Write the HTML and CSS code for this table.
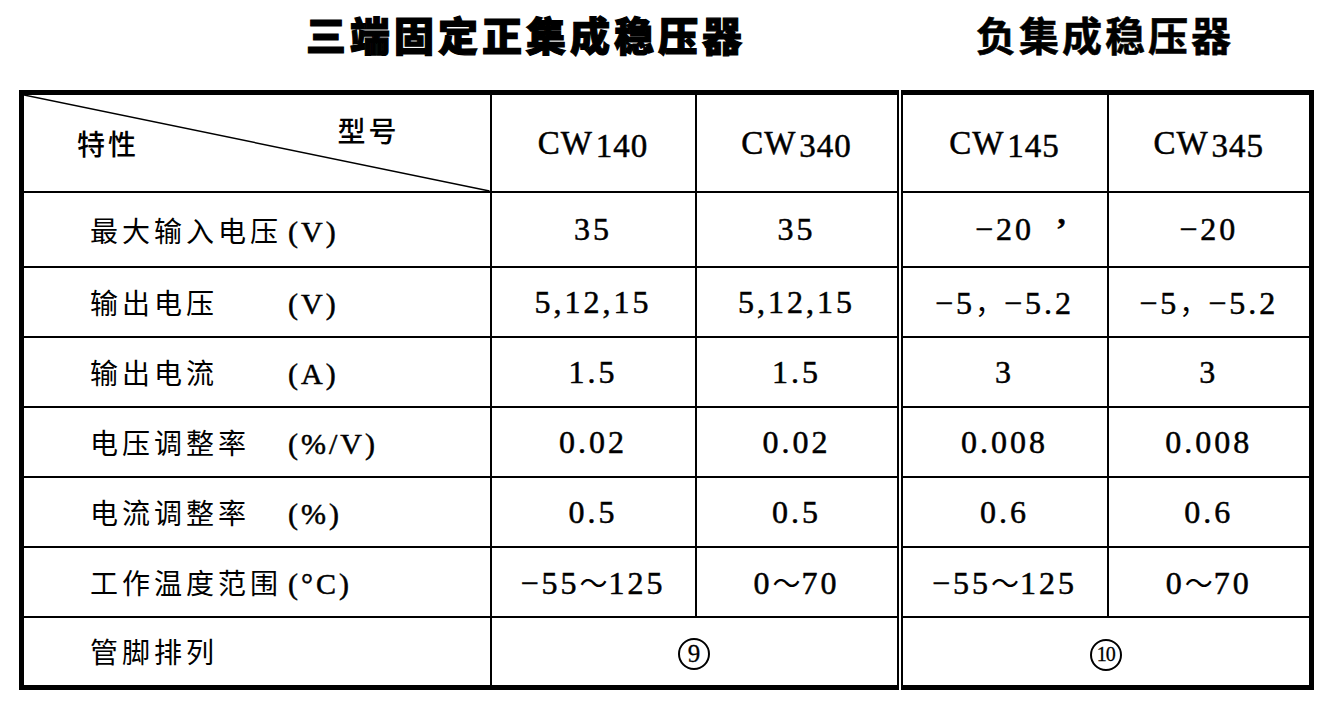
FILE: index.html
```html
<!DOCTYPE html>
<html lang="zh-CN">
<head>
    <meta charset="UTF-8">
    <meta name="viewport" content="width=device-width, initial-scale=1.0">
    <title>三端固定集成稳压器</title>
    <link rel="stylesheet" href="styles.css">
</head>
<body>
    <div class="page">
        <!-- Titles -->
        <div class="titles">
            <h1 class="title title-pos">三端固定正集成稳压器</h1>
            <h1 class="title title-neg">负集成稳压器</h1>
        </div>

        <!-- Spec table -->
        <table class="spec">
            <colgroup>
                <col class="c-label">
                <col class="c-140">
                <col class="c-340">
                <col class="c-145">
                <col class="c-345">
            </colgroup>
            <thead>
                <tr class="head-row">
                    <th class="corner">
                        <div class="corner-box">
                            <svg class="diag" viewBox="0 0 100 100" preserveAspectRatio="none">
                                <line x1="0" y1="0" x2="100" y2="100" vector-effect="non-scaling-stroke"></line>
                            </svg>
                            <span class="corner-row">特性</span>
                            <span class="corner-col">型号</span>
                        </div>
                    </th>
                    <th class="model">CW<span class="model-num">140</span></th>
                    <th class="model">CW<span class="model-num">340</span></th>
                    <th class="model split">CW<span class="model-num">145</span></th>
                    <th class="model">CW<span class="model-num">345</span></th>
                </tr>
            </thead>
            <tbody>
                <tr class="first-row">
                    <td class="label"><span class="name">最大输入电压</span><span class="unit">(V)</span></td>
                    <td class="val">35</td>
                    <td class="val">35</td>
                    <td class="val split">−20<span class="tick">’</span></td>
                    <td class="val">−20</td>
                </tr>
                <tr>
                    <td class="label"><span class="name">输出电压</span><span class="unit">(V)</span></td>
                    <td class="val">5,12,15</td>
                    <td class="val">5,12,15</td>
                    <td class="val split">−5<span class="cjk">，</span>−5.2</td>
                    <td class="val">−5<span class="cjk">，</span>−5.2</td>
                </tr>
                <tr>
                    <td class="label"><span class="name">输出电流</span><span class="unit">(A)</span></td>
                    <td class="val">1.5</td>
                    <td class="val">1.5</td>
                    <td class="val split">3</td>
                    <td class="val">3</td>
                </tr>
                <tr>
                    <td class="label"><span class="name">电压调整率</span><span class="unit">(%/V)</span></td>
                    <td class="val">0.02</td>
                    <td class="val">0.02</td>
                    <td class="val split">0.008</td>
                    <td class="val">0.008</td>
                </tr>
                <tr>
                    <td class="label"><span class="name">电流调整率</span><span class="unit">(%)</span></td>
                    <td class="val">0.5</td>
                    <td class="val">0.5</td>
                    <td class="val split">0.6</td>
                    <td class="val">0.6</td>
                </tr>
                <tr>
                    <td class="label"><span class="name">工作温度范围</span><span class="unit">(°C)</span></td>
                    <td class="val">−55<span class="cjk">～</span>125</td>
                    <td class="val">0<span class="cjk">～</span>70</td>
                    <td class="val split">−55<span class="cjk">～</span>125</td>
                    <td class="val">0<span class="cjk">～</span>70</td>
                </tr>
                <tr>
                    <td class="label"><span class="name">管脚排列</span></td>
                    <td class="val" colspan="2"><span class="circ">9</span></td>
                    <td class="val split" colspan="2"><span class="circ circ-wide">10</span></td>
                </tr>
            </tbody>
        </table>
    </div>
</body>
</html>
```

FILE: styles.css
```css
* {
    margin: 0;
    padding: 0;
    box-sizing: border-box;
}

body {
    background: #fff;
    color: #000;
    font-family: "Noto Sans CJK SC", sans-serif;
}

.page {
    width: 1328px;
    height: 719px;
    overflow: hidden;
}

/* Titles */
.titles {
    display: flex;
    height: 90px;
    padding: 10px 0 0 306px;
}

.title {
    font-size: 40px;
    line-height: 48px;
    font-weight: 900;
    letter-spacing: 4px;
    -webkit-text-stroke: 1.2px #000;
}

.title-neg {
    margin-left: 230px;
    letter-spacing: 3px;
    font-weight: 700;
    -webkit-text-stroke: 0.6px #000;
}

/* Table */
.spec {
    margin-left: 19px;
    width: 1290px;
    table-layout: fixed;
    border-collapse: collapse;
    border: 5px solid #000;
}

.c-label { width: 469px; }
.c-140 { width: 205px; }
.c-340 { width: 204px; }
.c-145 { width: 208px; }
.c-345 { width: 204px; }

.spec th,
.spec td {
    border: 2px solid #000;
    font-weight: normal;
    vertical-align: middle;
}

.spec .split {
    border-left: 6px double #000;
}

.head-row {
    height: 98px;
}

.spec tbody tr {
    height: 70px;
}

.spec tbody .first-row {
    height: 75px;
}

/* Corner cell with the diagonal */
.corner {
    padding: 0;
}

.corner-box {
    position: relative;
    display: flex;
    height: 96px;
    font-size: 28px;
    font-weight: 500;
    letter-spacing: 3px;
}

.diag {
    position: absolute;
    top: 0;
    left: 0;
    width: 100%;
    height: 100%;
}

.diag line {
    stroke: #000;
    stroke-width: 1.5;
}

.corner-row {
    align-self: center;
    margin-left: 53px;
}

.corner-col {
    align-self: flex-start;
    margin: 15px 90px 0 auto;
}

.model {
    font-family: "Liberation Serif", "DejaVu Serif", "Times New Roman", serif;
    font-size: 33px;
    letter-spacing: 1px;
    -webkit-text-stroke: 0.5px #000;
}

.model-num {
    margin-left: 3px;
    position: relative;
    top: 3px;
}

/* Rows */
.label {
    padding-left: 66px;
    text-align: left;
    font-size: 28px;
    font-weight: 500;
    white-space: nowrap;
}

.label .name {
    display: inline-block;
    min-width: 198px;
    letter-spacing: 4px;
}

.label .unit {
    font-family: "Liberation Serif", "DejaVu Serif", "Times New Roman", serif;
    font-size: 30px;
    letter-spacing: 3px;
    -webkit-text-stroke: 0.5px #000;
}

.val {
    text-align: center;
    font-family: "Liberation Serif", "DejaVu Serif", "Times New Roman", serif;
    font-size: 32px;
    letter-spacing: 3px;
    white-space: nowrap;
    -webkit-text-stroke: 0.5px #000;
}

.val .cjk {
    font-family: "Noto Sans CJK SC", sans-serif;
    font-size: 28px;
    -webkit-text-stroke: 0;
    letter-spacing: 1px;
}

.tick {
    position: absolute;
    margin-left: 22px;
    font-weight: bold;
}

.circ {
    display: inline-flex;
    align-items: center;
    justify-content: center;
    width: 32px;
    height: 32px;
    border: 2px solid #000;
    border-radius: 50%;
    font-size: 25px;
    letter-spacing: 0;
    -webkit-text-stroke: 0.3px #000;
}

.circ-wide {
    font-size: 20px;
    letter-spacing: -1px;
}
```
